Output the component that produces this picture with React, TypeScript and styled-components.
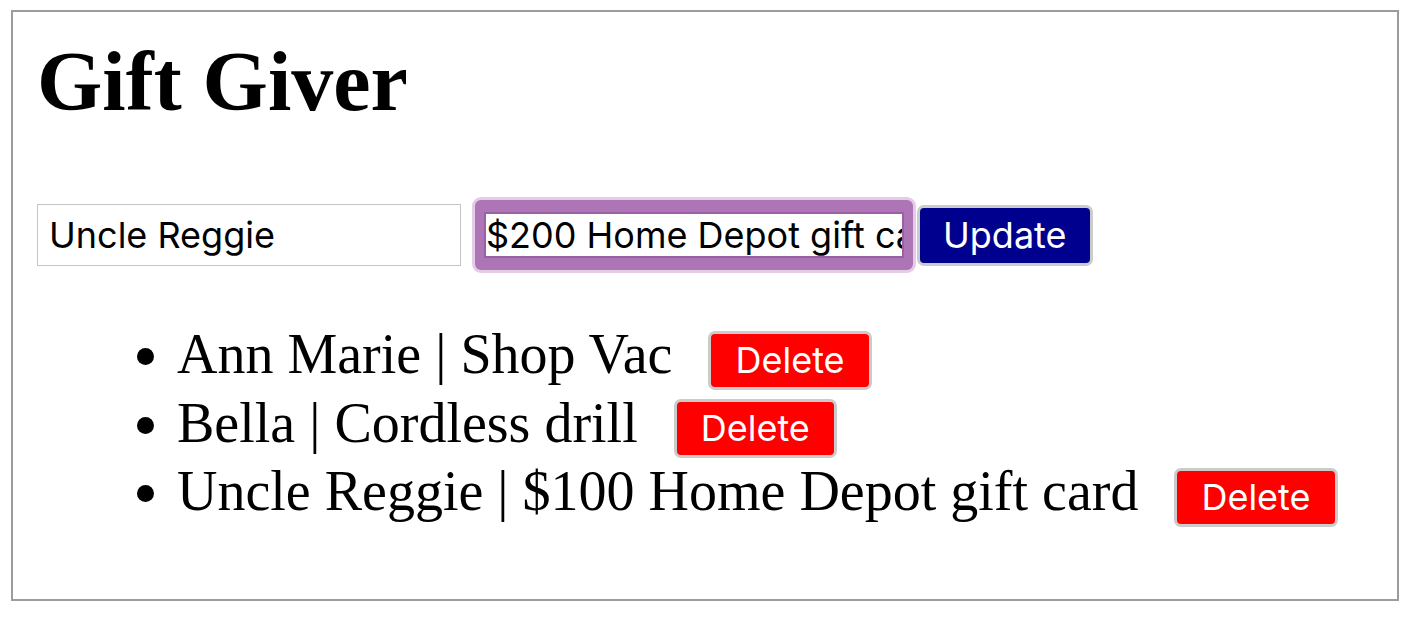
import React from "react";
import styled, { createGlobalStyle, css } from "styled-components";

const GlobalStyle = createGlobalStyle`
  html, body {
    background: #ffffff;
  }
  body {
    margin: 10px 0 0 11px;
  }
`;

const Page = styled.div`
  box-sizing: border-box;
  width: 1388px;
  height: 591px;
  border: 2px solid #9c9c9c;
  padding: 0 24px;
`;

const Title = styled.h1`
  margin: 22px 0 0;
  font-family: "Liberation Serif", "Times New Roman", serif;
  font-weight: 700;
  font-size: 84px;
  line-height: 95px;
  color: #000;
`;

const Form = styled.form`
  display: flex;
  align-items: center;
  height: 70px;
  margin-top: 71px;
`;

const TextInput = styled.input<{ $focused?: boolean; $width: number }>`
  box-sizing: border-box;
  width: ${(p) => p.$width}px;
  margin: 0;
  font-family: Inter, "Liberation Sans", Arial, sans-serif;
  font-size: 36px;
  color: #000;
  background: #fff;
  outline: none;
  ${(p) =>
    p.$focused
      ? css`
          height: 70px;
          margin-left: 14px;
          padding: 0 2px;
          border-style: solid;
          border-width: 12px 9px;
          border-color: #ad75b6;
          border-radius: 6px;
          box-shadow: 0 0 0 3px #e4cbe6, inset 0 0 0 2px #9a60a4;
        `
      : css`
          height: 62px;
          padding: 0 11px;
          border: 1px solid #c4c4c4;
          border-radius: 0;
        `}
`;

const ActionButton = styled.button<{ $variant: "update" | "delete" }>`
  box-sizing: border-box;
  margin: 0;
  border: 3px solid #cbcbcb;
  border-radius: 7px;
  font-family: Inter, "Liberation Sans", Arial, sans-serif;
  font-size: 36px;
  line-height: 43px;
  color: #fff;
  cursor: pointer;
  ${(p) =>
    p.$variant === "update"
      ? css`
          background: #00008e;
          padding: 6px 23px;
          margin-left: 4px;
        `
      : css`
          background: #ff0000;
          padding: 5px 24px;
          margin-left: 36px;
          vertical-align: middle;
        `}
`;

const GiftList = styled.ul`
  margin: 51px 0 0;
  padding-left: 140px;
  font-family: "Liberation Serif", "Times New Roman", serif;
  font-size: 56px;
  line-height: 66px;
  color: #000;
`;

const GiftItem = styled.li`
  list-style: disc outside;
`;

const gifts = [
  { name: "Ann Marie", gift: "Shop Vac" },
  { name: "Bella", gift: "Cordless drill" },
  { name: "Uncle Reggie", gift: "$100 Home Depot gift card" },
];

export default function App() {
  return (
    <>
      <GlobalStyle />
      <Page>
        <Title>Gift Giver</Title>
        <Form onSubmit={(e) => e.preventDefault()}>
          <TextInput $width={424} defaultValue="Uncle Reggie" />
          <TextInput $width={438} $focused defaultValue="$200 Home Depot gift card" />
          <ActionButton $variant="update" type="submit">
            Update
          </ActionButton>
        </Form>
        <GiftList>
          {gifts.map((g) => (
            <GiftItem key={g.name}>
              {g.name} | {g.gift}
              <ActionButton $variant="delete" type="button">
                Delete
              </ActionButton>
            </GiftItem>
          ))}
        </GiftList>
      </Page>
    </>
  );
}
